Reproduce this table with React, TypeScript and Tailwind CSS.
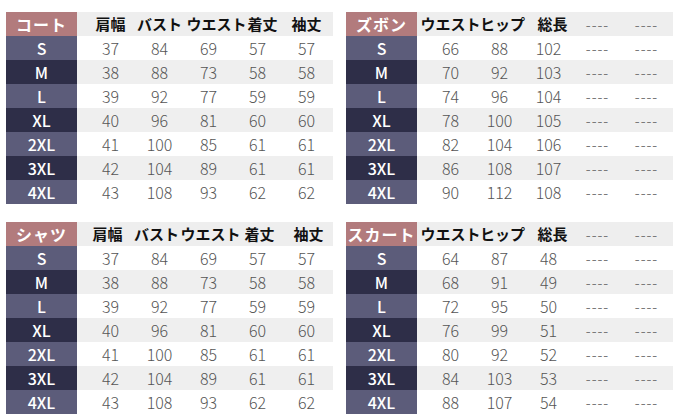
const sizes = ["S", "M", "L", "XL", "2XL", "3XL", "4XL"];

type Table = {
  title: string;
  heads: { text: string; shift?: string }[];
  rows: string[][];
};

const coatRows = [
  ["37", "84", "69", "57", "57"],
  ["38", "88", "73", "58", "58"],
  ["39", "92", "77", "59", "59"],
  ["40", "96", "81", "60", "60"],
  ["41", "100", "85", "61", "61"],
  ["42", "104", "89", "61", "61"],
  ["43", "108", "93", "62", "62"],
];

const tables: Table[] = [
  {
    title: "コート",
    heads: [
      { text: "肩幅" },
      { text: "バスト" },
      { text: "ウエスト", shift: "translate-x-[8px]" },
      { text: "着丈", shift: "translate-x-[5px]" },
      { text: "袖丈" },
    ],
    rows: coatRows,
  },
  {
    title: "ズボン",
    heads: [{ text: "ウエスト" }, { text: "ヒップ", shift: "translate-x-[3px]" }, { text: "総長", shift: "translate-x-[4px]" }, { text: "----" }, { text: "----" }],
    rows: [
      ["66", "88", "102", "----", "----"],
      ["70", "92", "103", "----", "----"],
      ["74", "96", "104", "----", "----"],
      ["78", "100", "105", "----", "----"],
      ["82", "104", "106", "----", "----"],
      ["86", "108", "107", "----", "----"],
      ["90", "112", "108", "----", "----"],
    ],
  },
  {
    title: "シャツ",
    heads: [
      { text: "肩幅", shift: "-translate-x-[3px]" },
      { text: "バスト", shift: "-translate-x-[3px]" },
      { text: "ウエスト", shift: "translate-x-[2px]" },
      { text: "着丈", shift: "translate-x-[2px]" },
      { text: "袖丈", shift: "translate-x-[2px]" },
    ],
    rows: coatRows,
  },
  {
    title: "スカート",
    heads: [{ text: "ウエスト" }, { text: "ヒップ", shift: "translate-x-[3px]" }, { text: "総長", shift: "translate-x-[4px]" }, { text: "----" }, { text: "----" }],
    rows: [
      ["64", "87", "48", "----", "----"],
      ["68", "91", "49", "----", "----"],
      ["72", "95", "50", "----", "----"],
      ["76", "99", "51", "----", "----"],
      ["80", "92", "52", "----", "----"],
      ["84", "103", "53", "----", "----"],
      ["88", "107", "54", "----", "----"],
    ],
  },
];

function Cell({ value, head }: { value: string; head?: boolean }) {
  if (value === "----") {
    return <span className="text-center text-[14px] tracking-[1px] text-[#7a7a7a]">----</span>;
  }
  return (
    <span
      className={
        head
          ? "text-center text-[15px] font-bold text-[#111] whitespace-nowrap"
          : "text-center text-[16px] font-light text-[#555]"
      }
    >
      {value}
    </span>
  );
}

function SizeTable({ table }: { table: Table }) {
  return (
    <div className="flex w-[327px] flex-col">
      <div className="flex h-[24px]">
        <div className="flex w-[71px] items-center justify-center bg-[#b27b7d] text-[16px] font-bold tracking-[1px] text-white whitespace-nowrap">
          {table.title}
        </div>
        <div className="grid flex-1 grid-cols-[repeat(5,49px)] items-center bg-[#eeeeee] pl-[9px]">
          {table.heads.map((h, i) => (
            <div key={i} className={`flex justify-center ${h.shift ?? ""}`}>
              <Cell value={h.text} head />
            </div>
          ))}
        </div>
      </div>
      {sizes.map((s, r) => (
        <div key={s} className="flex h-[24px]">
          <div
            className={`flex w-[71px] items-center justify-center text-[16px] font-medium text-white ${
              r % 2 === 0 ? "bg-[#5c5c7a]" : "bg-[#2e2e48]"
            }`}
          >
            {s}
          </div>
          <div
            className={`grid flex-1 grid-cols-[repeat(5,49px)] items-center pl-[9px] ${
              r % 2 === 1 ? "bg-[#efefef]" : "bg-white"
            }`}
          >
            {table.rows[r].map((v, i) => (
              <div key={i} className="flex justify-center">
                <Cell value={v} />
              </div>
            ))}
          </div>
        </div>
      ))}
    </div>
  );
}

export default function App() {
  return (
    <div
      className="h-[419px] w-[680px] bg-white pl-[6px] pt-[12px]"
      style={{ fontFamily: '"Noto Sans CJK JP", "Noto Sans", sans-serif' }}
    >
      <div className="flex flex-col gap-[18px]">
        <div className="flex gap-[13px]">
          <SizeTable table={tables[0]} />
          <SizeTable table={tables[1]} />
        </div>
        <div className="flex gap-[13px]">
          <SizeTable table={tables[2]} />
          <SizeTable table={tables[3]} />
        </div>
      </div>
    </div>
  );
}
